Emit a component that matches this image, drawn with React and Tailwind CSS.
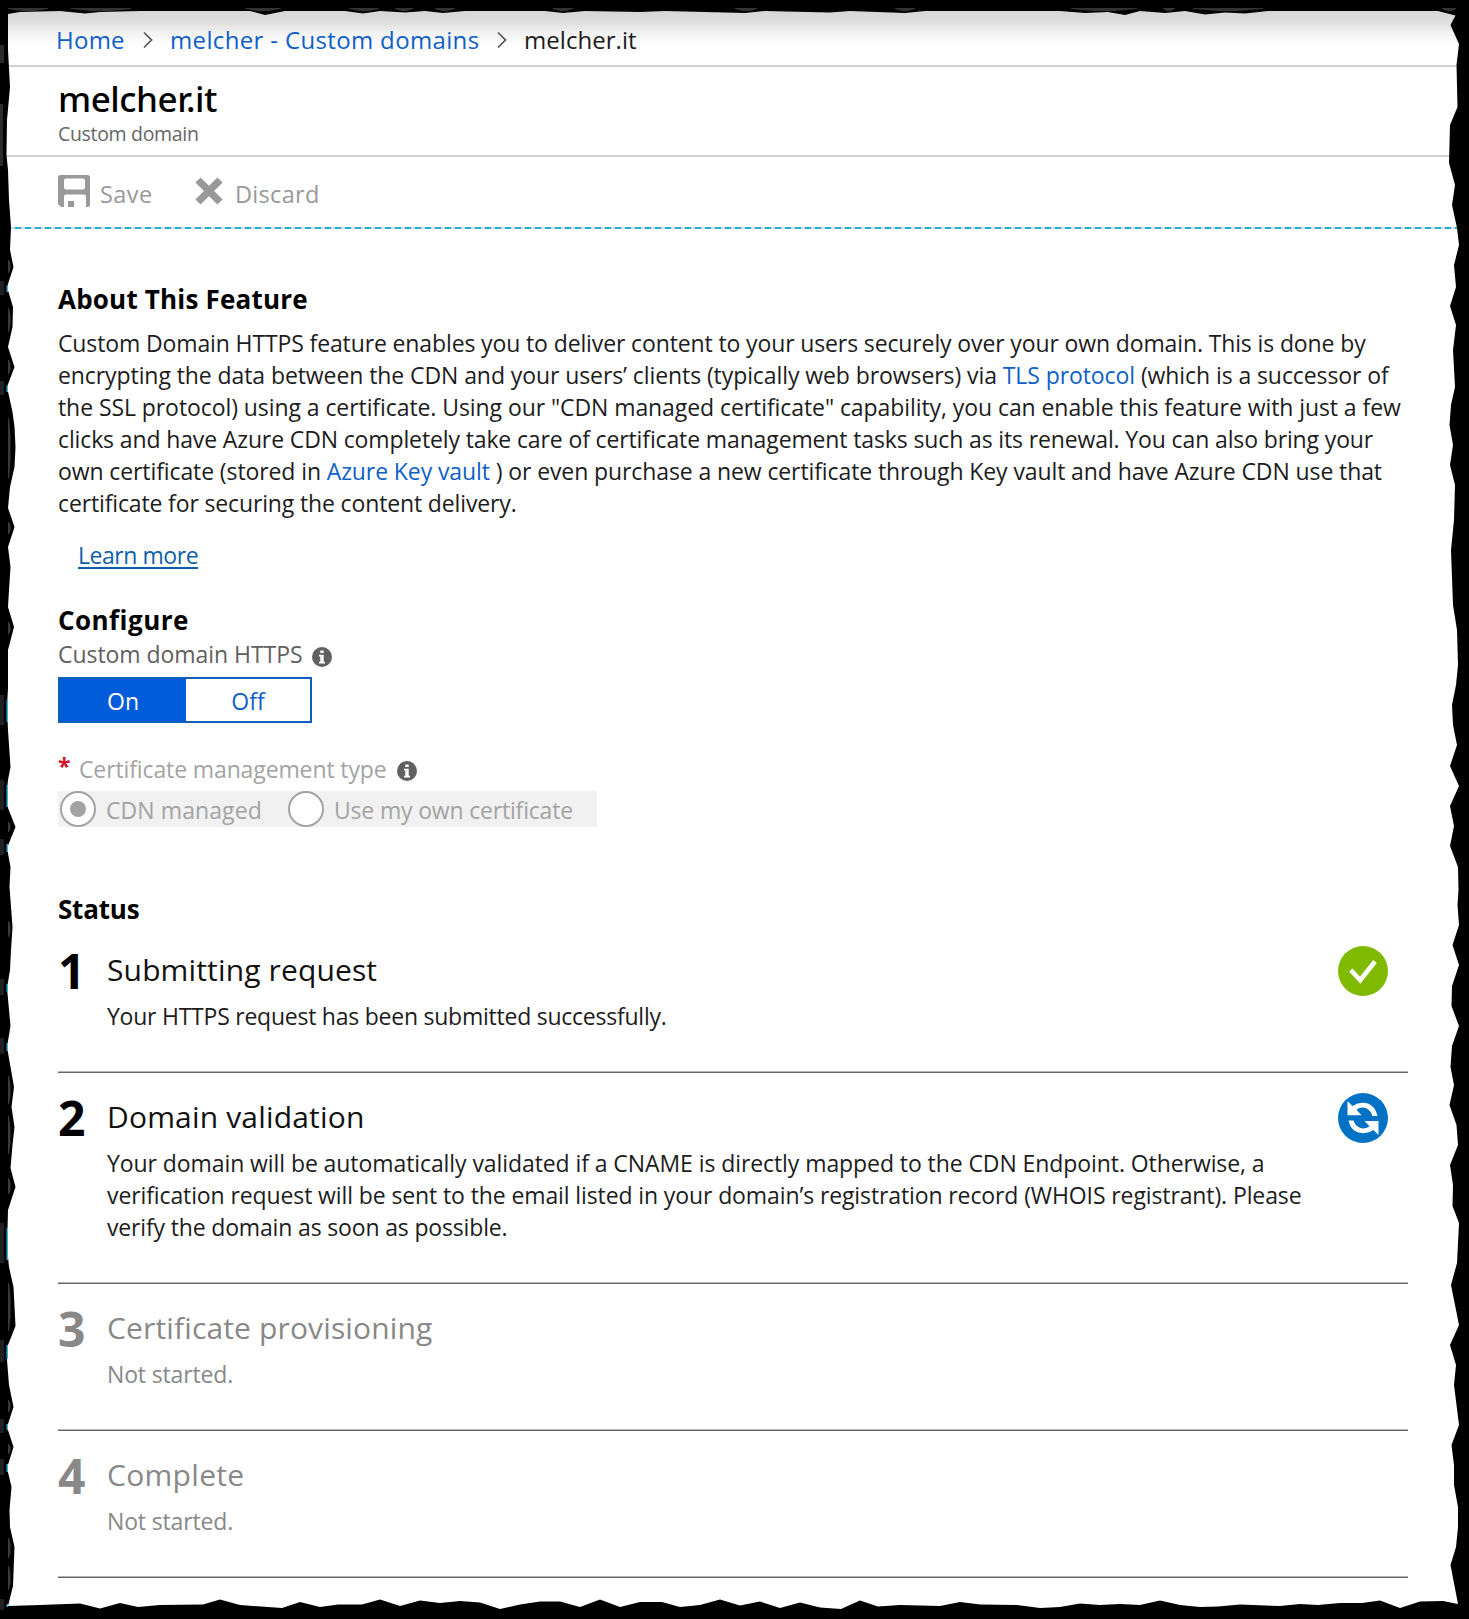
import React from "react";

const leftEdge =
  "8,1606 13,1586 14.5,1547 10,1527 9.5,1510 11.5,1487 7,1468 13.5,1447 7,1427 13.5,1407 9,1385 7,1360 8,1345 15.5,1326 13.5,1287 9,1267 7,1247 8,1210 15.5,1187 10.5,1168 12.5,1145 14.5,1127 11.5,1107 14,1087 7,1047 10.5,1026 7,988 10,970 11,950 12.5,927 9.5,887 10.5,867 7,848 15.5,827 8,808 7,790 8,780 10.5,767 8,730 7,707 8,688 8,650 14,627 8,607 9,590 10.5,567 8,547 14.5,527 8,508 10,487 14.5,467 15.5,447 14.5,427 12.5,412 7,387 14.5,367 8,347 12.5,327 13,307 7,287 13.5,267 10,250 11,227 9,200 8,170 6.5,155 7,120 10,87 8,50";
const topEdge =
  "8,14 20,12 60,11 85,13.5 100,12 140,11 250,11 265,15 285,11 345,11 363,13.5 380,11 405,12.5 425,11 443,13 465,11 545,11 563,13 585,11 640,12 665,11 745,13 765,11 830,12.5 850,11 905,13 925,11 1000,11 1060,11 1085,13 1108,12 1125,15 1140,11 1165,13 1185,11 1205,14.5 1225,12.5 1245,13.5 1268,11 1438,11 1455.5,15.5";
const rightEdge =
  "1450.5,25 1459,44 1456.5,65 1457.5,107 1450,125 1449,163 1455,185 1452,205 1457,228 1459,245 1454,265 1456,287 1450,306 1456,325 1453,350 1455,387 1451,405 1449.5,425 1453,445 1450,465 1455,485 1454,520 1451,550 1453,605 1457,630 1458,665 1456,685 1452,705 1453,725 1457,745 1450,766 1459,786 1450,806 1454,826 1450,846 1458,867 1458.5,890 1457.5,905 1459,925 1452.5,945 1459,965 1452,986 1451.5,1006 1459,1026 1452,1046 1450.5,1067 1454,1085 1449.5,1105 1456.5,1125 1458,1145 1450,1165 1453,1185 1452.5,1206 1459,1223 1457,1263 1451,1285 1459,1325 1450,1345 1456,1365 1454,1385 1459,1425 1451.5,1445 1454,1465 1454,1485 1458,1507 1458,1527 1456,1547 1450.5,1565 1458,1604";
const bottomEdge =
  "1443,1601 1420,1601.5 1400,1608 1380,1600.5 1362,1603 1340,1603 1318,1605 1300,1604 1280,1606 1240,1604.5 1218,1606.5 1200,1607 1180,1605 1160,1600.5 1140,1605 1120,1604 1100,1605 1080,1603.5 1060,1607 1040,1608 1017,1605 980,1604.5 960,1602 940,1606 900,1605 878,1606.5 860,1600.5 841,1609 820,1607.5 800,1602.5 780,1608 760,1601.5 740,1605.5 720,1599.5 700,1605 680,1607 662,1602 640,1602 620,1607 600,1599.5 580,1607 560,1601.5 540,1601.5 520,1604.5 500,1609 480,1602.5 460,1601 440,1603 420,1600.5 400,1606 380,1599.5 362,1604.5 338,1604.5 320,1607 300,1602 282,1608 240,1605 220,1599.5 203,1604.5 160,1605 138,1607 120,1603 100,1608.5 80,1603.5 40,1605";

// [y, length] of the fragments that show through the torn left edge
const greyBits = [[260, 13], [308, 24], [360, 14], [418, 60], [522, 12], [622, 12], [822, 10], [921, 16], [1076, 28], [1116, 38], [1178, 16], [1283, 48], [1400, 12], [1444, 10], [1538, 20], [1566, 24]];
const cyanBits = [[286, 6], [386, 6], [700, 22], [785, 22], [844, 8], [984, 8], [1043, 8], [1228, 32], [1345, 14], [1424, 6], [1464, 8], [1604, 3]];
const topBits = [[8, 40], [71, 60], [245, 36], [349, 30], [395, 18], [435, 20], [553, 20], [735, 22], [895, 20], [1071, 66], [1163, 12], [1193, 70], [1442, 14]];

function TornEdge() {
  return (
    <svg className="pointer-events-none absolute inset-0" width="1469" height="1619" viewBox="0 0 1469 1619" aria-hidden="true">
      <path fillRule="evenodd" d={`M0,0H1469V1619H0Z M${topEdge} ${rightEdge} ${bottomEdge} ${leftEdge}Z`} fill="#000" />
      {greyBits.map(([y, h]) => (
        <path key={y} d={`M8,${y}h1l1.5,${h * 0.3}v${h * 0.4}l-1.5,${h * 0.3}h-1z`} fill="#3a3a3a" />
      ))}
      {cyanBits.map(([y, h]) => (
        <g key={y}>
          <rect x="6.5" y={y} width="1.5" height={h} fill="#35b4d6" />
          <rect x="0" y={y - 5} width="4" height={h + 8} fill="#201f22" />
        </g>
      ))}
      <rect x="0" y="45" width="4" height="18" fill="#2b2b2b" />
      <rect x="0" y="104" width="3" height="62" fill="#2b2b2b" />
      {topBits.map(([x, w]) => (
        <path key={x} d={`M${x},8h${w}v1l${-w * 0.35},2h${-w * 0.3}l${-w * 0.35},-2z`} fill="#333" />
      ))}
    </svg>
  );
}

function Chevron() {
  return (
    <svg width="10" height="18" viewBox="0 0 10 18" fill="none" stroke="#555" strokeWidth="1.7" aria-hidden="true">
      <path d="M1 1.5L8.5 9L1 16.5" />
    </svg>
  );
}

function SaveIcon() {
  return (
    <svg width="32" height="32" viewBox="0 0 32 32" aria-hidden="true">
      <path fillRule="evenodd" fill="#999" d="M2.5 0H29.500Q32 0 32 2.500V29.500Q32 32 29.500 32H28V21.500Q28 19.500 26 19.500H8Q6 19.500 6 21.500V32H3L0 29V2.500Q0 0 2.500 0ZM8 3.500Q6 3.500 6 5.500V12.500Q6 14.500 8 14.500H25Q27 14.500 27 12.500V5.500Q27 3.500 25 3.500ZM10 26H16V32H10Z" />
    </svg>
  );
}

function DiscardIcon() {
  return (
    <svg width="28" height="28" viewBox="0 0 28 28" aria-hidden="true">
      <path d="M3 3L25 25M25 3L3 25" stroke="#999" strokeWidth="7.400" />
    </svg>
  );
}

function InfoIcon() {
  return (
    <svg width="20" height="20" viewBox="0 0 20 20" aria-hidden="true">
      <circle cx="10" cy="10" r="10" fill="#606060" />
      <path fill="#fff" d="M8.300 3.500H11.700V6H8.300ZM7 7.800H11.700V14.800H13V16.500H7V14.800H8.300V9.500H7Z" />
    </svg>
  );
}

function CheckBadge() {
  return (
    <svg width="50" height="50" viewBox="0 0 50 50" aria-hidden="true">
      <circle cx="25" cy="25" r="25" fill="#7fba00" />
      <path d="M12.800 24L22.200 34.200L37 15.500" fill="none" stroke="#fff" strokeWidth="4.600" />
    </svg>
  );
}

function SyncBadge() {
  return (
    <svg width="50" height="50" viewBox="0 0 50 50" aria-hidden="true">
      <circle cx="25" cy="25" r="25" fill="#0072c6" />
      <path fill="#fff" d="M9.500 8L14.500 13Q20 9.500 25.500 9.800Q36.500 10.500 39.500 23H34.500Q32 15 25 14.500Q21.500 14.300 18.500 16.800L23.500 22.300H9.500Z" />
      <path fill="#fff" d="M40.500 42L35.500 37Q30.500 40.500 25 40.200Q13 39.500 10.500 27.500H15.500Q18 35 25 35.500Q28.500 35.500 31.500 33.200L26.500 28H40.500Z" />
    </svg>
  );
}

function Line({ className, children }) {
  return <span className={`block whitespace-nowrap ${className}`}>{children}</span>;
}

function Step({ number, title, titleClass, muted, badge, children }) {
  return (
    <li>
      <div className={`flex items-start pt-[21px] pb-[39px] ${muted ? "text-[#888]" : "text-black"}`}>
        <span className="-mt-[6px] w-[49px] shrink-0 text-[48px] leading-[60px] font-bold tracking-[-1px]">{number}</span>
        <div className="grow">
          <h3 className={`relative top-px text-[30px] leading-[44px] ${muted ? "" : "text-[#111]"} ${titleClass}`}>{title}</h3>
          <p className={`mt-[9px] ${muted ? "text-[#888]" : "text-[#1c1c1c]"}`}>{children}</p>
        </div>
        <span className="-mt-px mr-5 h-[50px] w-[50px] shrink-0">{badge}</span>
      </div>
      <div className="h-px bg-[#b4b4b4]" />
      <div className="h-px bg-[#666]" />
    </li>
  );
}

export default function App() {
  return (
    <div className="relative h-[1619px] w-[1469px] overflow-hidden bg-white font-['Open_Sans',sans-serif] text-[23px] leading-8 text-[#1c1c1c]">
      <nav className="flex h-[67px] items-center border-b-2 border-[#d2d2d2] bg-[linear-gradient(to_bottom,#d6d6d6_11px,#dedede_22px,#f2f2f2_33px,#fff_46px)] pt-[15px] pl-14 text-[24px]">
        <a className="w-[87px] whitespace-nowrap tracking-[0.25px] text-[#0f5fc8]">Home</a>
        <Chevron />
        <a className="ml-[17px] w-[327px] whitespace-nowrap tracking-[0.35px] text-[#0f5fc8]">melcher - Custom domains</a>
        <Chevron />
        <span className="ml-[17px] tracking-[0.05px]">melcher.it</span>
      </nav>

      <header className="h-[90px] border-b-2 border-[#d2d2d2] pt-[10px] pl-[58px]">
        <h1 className="font-['Noto_Sans',sans-serif] text-[35px] leading-[44px] font-medium tracking-[-0.45px] text-black">melcher.it</h1>
        <p className="text-[19.500px] leading-[26px] tracking-[-0.32px] text-[#666]">Custom domain</p>
      </header>

      <div className="flex h-[70px] items-start pt-[18px] pl-[58px] text-[23.500px] text-[#999]">
        <SaveIcon />
        <span className="mt-[3px] ml-[10px] w-[95px] tracking-[0.45px]">Save</span>
        <span className="mt-[2px]"><DiscardIcon /></span>
        <span className="mt-[3px] ml-[12px] tracking-[0.3px]">Discard</span>
      </div>
      <div className="h-[2px] bg-[linear-gradient(to_right,#22b0d2_1px,#d8dcdc_1px,#d8dcdc_5px,#22b0d2_5px)] bg-[length:10px_2px]" />

      <main className="pr-[61px] pl-[58px]">
        <section className="pt-[52px]">
          <h2 className="text-[26px] leading-9 font-bold tracking-[0.2px] text-black">About This Feature</h2>
          <p className="mt-[10px]">
            <Line className="tracking-[-0.125px]">Custom Domain HTTPS feature enables you to deliver content to your users securely over your own domain. This is done by</Line>
            <Line className="tracking-[-0.084px]">encrypting the data between the CDN and your users’ clients (typically web browsers) via <a className="text-[#0f5fc8]">TLS protocol</a> (which is a successor of</Line>
            <Line className="tracking-[-0.075px]">the SSL protocol) using a certificate. Using our "CDN managed certificate" capability, you can enable this feature with just a few</Line>
            <Line className="tracking-[-0.128px]">clicks and have Azure CDN completely take care of certificate management tasks such as its renewal. You can also bring your</Line>
            <Line className="tracking-[-0.103px]">own certificate (stored in <a className="text-[#0f5fc8]">Azure Key vault</a> ) or even purchase a new certificate through Key vault and have Azure CDN use that</Line>
            <Line className="tracking-[-0.14px]">certificate for securing the content delivery.</Line>
          </p>
          <a className="mt-5 ml-[20px] block w-fit tracking-[-0.45px] whitespace-nowrap text-[#0f5fa8] underline decoration-2 underline-offset-[3px]">Learn more</a>
        </section>

        <section className="pt-[31px]">
          <h2 className="text-[26px] leading-9 font-bold tracking-[0.45px] text-black">Configure</h2>
          <div className="flex items-center text-[#606060]">
            <span className="mr-[9px] w-[245px] whitespace-nowrap tracking-[-0.05px]">Custom domain HTTPS</span>
            <span className="mt-[5px]"><InfoIcon /></span>
          </div>
          <div className="mt-[7px] flex h-[46px] w-[254px] border-2 border-[#0f5fbf] text-center leading-[44px]">
            <span className="w-[126px] bg-[#015cda] text-white">On</span>
            <span className="grow text-[#0f5fc8]">Off</span>
          </div>

          <div className="mt-[29px] flex items-center text-[#a3a3a3]">
            <span className="-mt-[5px] w-[21px] font-bold text-[#d2142d]">*</span>
            <span className="mt-px mr-[10px] w-[308px] whitespace-nowrap tracking-[-0.12px]">Certificate management type</span>
            <span className="mt-[5px]"><InfoIcon /></span>
          </div>
          <div className="mt-[6px] flex h-9 w-[539px] items-center bg-[#f1f1f1] text-[#a3a3a3]">
            <span className="ml-[2px] flex size-9 items-center justify-center rounded-full border-2 border-[#a3a3a3] bg-white">
              <span className="size-4 rounded-full bg-[#a3a3a3]" />
            </span>
            <span className="mt-[2px] ml-[10px] w-[182px] whitespace-nowrap tracking-[0.08px]">CDN managed</span>
            <span className="size-9 rounded-full border-2 border-[#a3a3a3] bg-white" />
            <span className="mt-[2px] ml-[10px] tracking-[-0.18px] whitespace-nowrap">Use my own certificate</span>
          </div>
        </section>

        <section className="pt-[64px]">
          <h2 className="-mb-px text-[26px] leading-9 font-bold tracking-[-0.2px] text-black">Status</h2>
          <ol>
            <Step number="1" title="Submitting request" titleClass="tracking-[0.14px]" badge={<CheckBadge />}>
              <Line className="tracking-[-0.24px]">Your HTTPS request has been submitted successfully.</Line>
            </Step>
            <Step number="2" title="Domain validation" titleClass="tracking-[0.17px]" badge={<SyncBadge />}>
              <Line className="tracking-[-0.08px]">Your domain will be automatically validated if a CNAME is directly mapped to the CDN Endpoint. Otherwise, a</Line>
              <Line className="tracking-[-0.11px]">verification request will be sent to the email listed in your domain’s registration record (WHOIS registrant). Please</Line>
              <Line className="tracking-[-0.16px]">verify the domain as soon as possible.</Line>
            </Step>
            <Step number="3" title="Certificate provisioning" titleClass="tracking-[0.14px]" muted>
              <Line className="tracking-[-0.15px]">Not started.</Line>
            </Step>
            <Step number="4" title="Complete" titleClass="tracking-[0.3px]" muted>
              <Line className="tracking-[-0.15px]">Not started.</Line>
            </Step>
          </ol>
        </section>
      </main>

      <TornEdge />
    </div>
  );
}
